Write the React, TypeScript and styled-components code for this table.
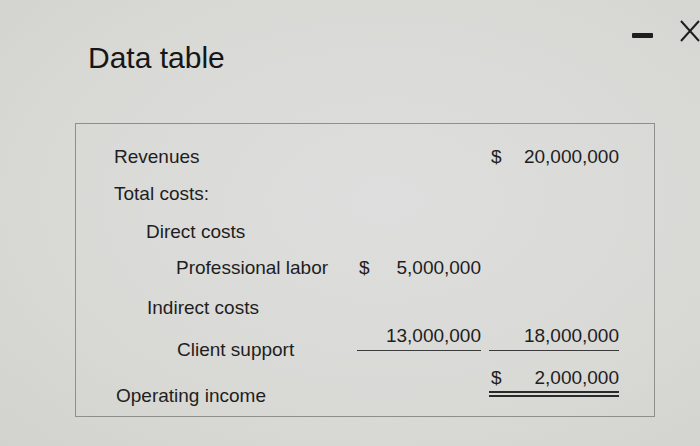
import React, { FC } from 'react';
import styled, { createGlobalStyle } from 'styled-components';

const GlobalStyle = createGlobalStyle`
  html, body {
    margin: 0;
    padding: 0;
    background: #dadad7;
  }
  body {
    font-family: 'Liberation Sans', Arial, sans-serif;
    color: #222;
  }
`;

const Page = styled.div`
  width: 700px;
  height: 446px;
  overflow: hidden;
  background: radial-gradient(ellipse at 55% 45%, #dedede 0%, #d9d9d6 60%, #d2d2cf 100%);
`;

const Header = styled.div`
  display: flex;
  justify-content: space-between;
  align-items: flex-start;
`;

const Title = styled.h1`
  margin: 43px 0 0 88px;
  font-size: 30px;
  line-height: 30px;
  font-weight: 400;
  color: #161616;
`;

const Controls = styled.div`
  display: flex;
  align-items: flex-start;
  gap: 27px;
  padding-top: 20px;
`;

const Minimize = styled.div`
  width: 21px;
  height: 5px;
  margin-top: 13px;
  background: #1e1e1e;
  border-radius: 1px;
`;

const Box = styled.div`
  box-sizing: border-box;
  margin: 50px 0 0 75px;
  width: 580px;
  height: 294px;
  border: 1px solid #8e8e8c;
  padding: 22px 0 0 38px;
  font-size: 19px;
  line-height: 22px;
  color: #1e1e1e;
`;

const Row = styled.div<{ $h: number }>`
  display: grid;
  grid-template-columns: 235px 124px 130px;
  column-gap: 8px;
  height: ${(p) => p.$h}px;
  align-items: start;
`;

const Label = styled.div<{ $indent?: number; $drop?: number }>`
  padding-left: ${(p) => p.$indent ?? 0}px;
  margin-top: ${(p) => p.$drop ?? 0}px;
  white-space: nowrap;
`;

const Amount = styled.div<{ $line?: 'single' | 'double' }>`
  display: flex;
  justify-content: space-between;
  padding-left: 2px;
  white-space: nowrap;
  padding-bottom: ${(p) => (p.$line === 'double' ? 2 : p.$line ? 3 : 0)}px;
  border-bottom: ${(p) =>
    p.$line === 'double' ? '6px double #2a2a2a' : p.$line ? '1px solid #3a3a3a' : 'none'};
`;

const CloseIcon: FC = () => (
  <svg width="20" height="22" viewBox="0 0 20 22">
    <path d="M1 1 L19 21 M19 1 L1 21" stroke="#1e1e1e" strokeWidth="2" fill="none" />
  </svg>
);

const App: FC = () => (
  <Page>
    <GlobalStyle />
    <Header>
      <Title>Data table</Title>
      <Controls>
        <Minimize />
        <CloseIcon />
      </Controls>
    </Header>
    <Box>
      <Row $h={37}>
        <Label>Revenues</Label>
        <div />
        <Amount>
          <span>$</span>
          <span>20,000,000</span>
        </Amount>
      </Row>
      <Row $h={38}>
        <Label>Total costs:</Label>
      </Row>
      <Row $h={36}>
        <Label $indent={32}>Direct costs</Label>
      </Row>
      <Row $h={40}>
        <Label $indent={62}>Professional labor</Label>
        <Amount>
          <span>$</span>
          <span>5,000,000</span>
        </Amount>
      </Row>
      <Row $h={28}>
        <Label $indent={33}>Indirect costs</Label>
      </Row>
      <Row $h={42}>
        <Label $indent={63} $drop={14}>
          Client support
        </Label>
        <Amount $line="single">
          <span />
          <span>13,000,000</span>
        </Amount>
        <Amount $line="single">
          <span />
          <span>18,000,000</span>
        </Amount>
      </Row>
      <Row $h={40}>
        <Label $indent={2} $drop={18}>
          Operating income
        </Label>
        <div />
        <Amount $line="double">
          <span>$</span>
          <span>2,000,000</span>
        </Amount>
      </Row>
    </Box>
  </Page>
);

export default App;
